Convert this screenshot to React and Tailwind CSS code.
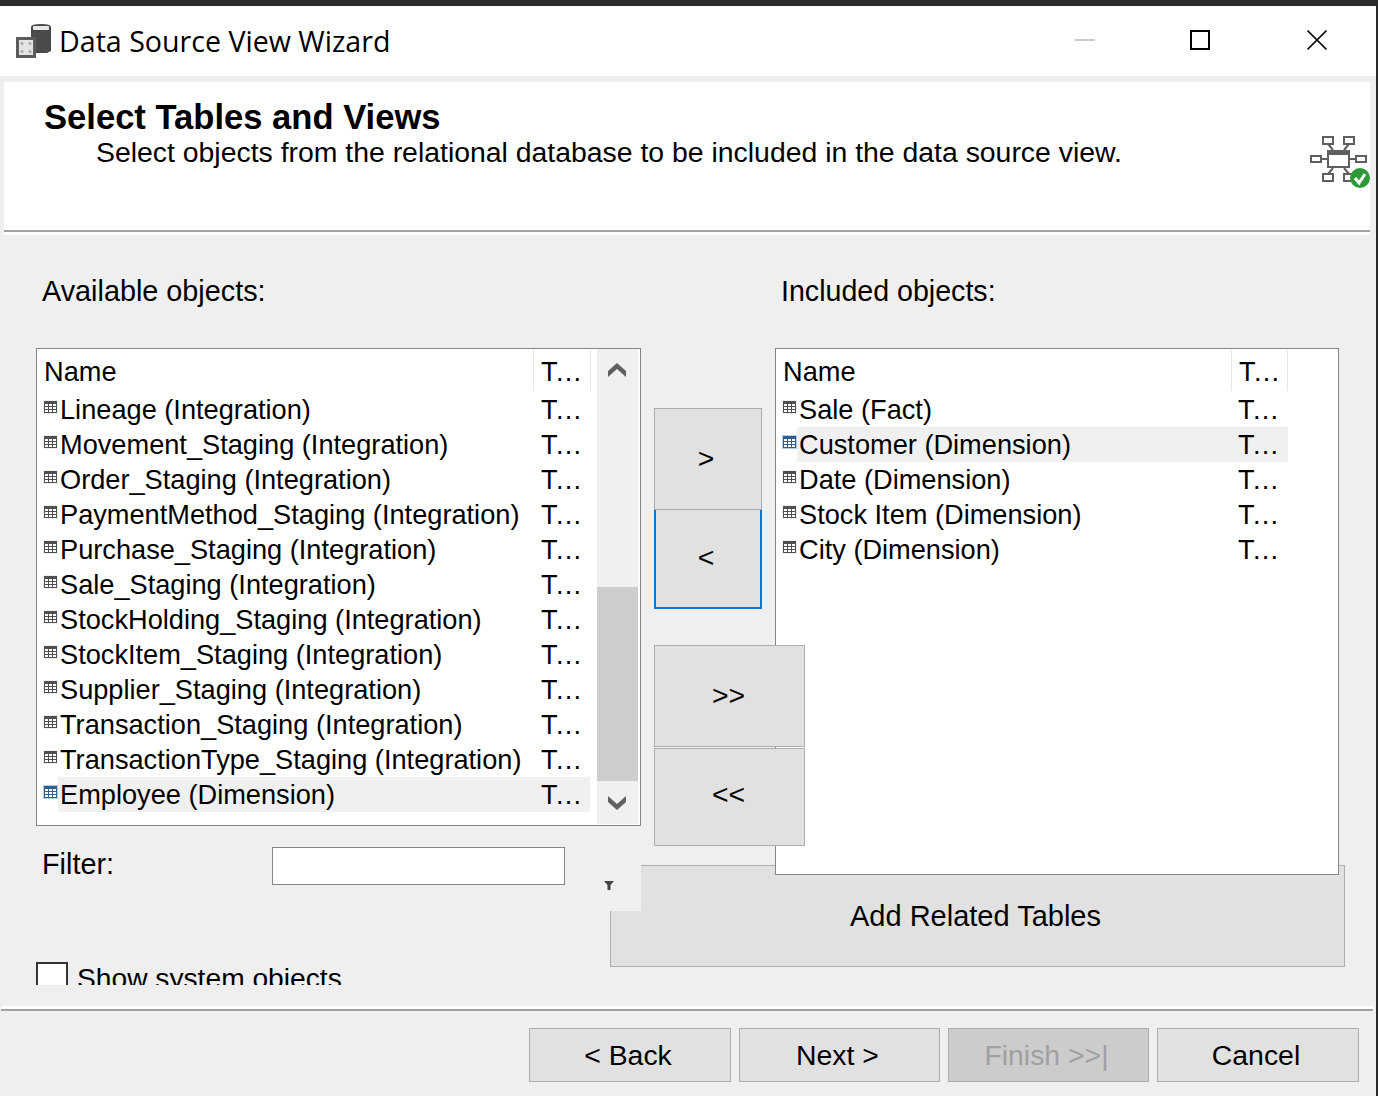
import { twMerge } from "tailwind-merge";

const availableRows = [
  "Lineage (Integration)",
  "Movement_Staging (Integration)",
  "Order_Staging (Integration)",
  "PaymentMethod_Staging (Integration)",
  "Purchase_Staging (Integration)",
  "Sale_Staging (Integration)",
  "StockHolding_Staging (Integration)",
  "StockItem_Staging (Integration)",
  "Supplier_Staging (Integration)",
  "Transaction_Staging (Integration)",
  "TransactionType_Staging (Integration)",
  "Employee (Dimension)",
];

const includedRows = [
  "Sale (Fact)",
  "Customer (Dimension)",
  "Date (Dimension)",
  "Stock Item (Dimension)",
  "City (Dimension)",
];

function TableIcon({ selected }) {
  const dark = selected ? "#2f5f8f" : "#4f4f4f";
  return (
    <svg width="15" height="14" viewBox="0 0 15 14" className="shrink-0">
      <rect width="15" height="14" fill={selected ? "#b5cfe6" : "#f0f0f0"} />
      <rect x="1.5" y="1.5" width="12" height="11" fill="#ffffff" stroke={dark} />
      <rect x="1" y="1" width="13" height="3" fill={dark} />
      <path d="M5.5 4v8M9.5 4v8M2 6.5h11M2 9.5h11" stroke={dark} strokeWidth="1" />
    </svg>
  );
}

function ObjectRow({ name, selected, nameWidth, cellWidth }) {
  return (
    <div className="flex h-[35px] pl-[6px]">
      <div className="w-[15px] shrink-0 pt-[8px]">
        <TableIcon selected={selected} />
      </div>
      <div className={`flex h-[35px] items-center pt-[2px] ${cellWidth} ${selected ? "bg-[#f0f0f0]" : ""}`}>
        <div className={`${nameWidth} shrink-0 pl-[2px] whitespace-nowrap`}>{name}</div>
        <div className="tracking-[1.3px]">T...</div>
      </div>
    </div>
  );
}

function ListHeader({ nameWidth, typeWidth }) {
  return (
    <div className="flex h-[43px] items-center">
      <div className={`${nameWidth} flex h-[41px] shrink-0 items-center border-r border-[#e5e5e5] pl-[7px] pt-[4px]`}>Name</div>
      <div className={`${typeWidth} flex h-[41px] shrink-0 items-center border-r border-[#e5e5e5] pl-[7px] pt-[4px] tracking-[1.3px]`}>T...</div>
    </div>
  );
}

function Chevron({ down }) {
  return (
    <svg width="18" height="16" viewBox="0 0 18 16" className="mr-[1px]">
      <path
        d={down ? "M0 1l9 8 9-8v6l-9 8-9-8z" : "M0 15l9-8 9 8V9L9 1 0 9z"}
        fill="#606060"
      />
    </svg>
  );
}

function NetworkIcon() {
  return (
    <svg width="60" height="53" viewBox="0 0 60 53" className="mt-[53px] shrink-0">
      <g fill="none" stroke="#5f5f5f" strokeWidth="2">
        <path d="M18 9l5 6M39 9l-5 6M18 39l5-6M39 39l-5-6M11 24h6M40 24h6" />
        <rect x="13" y="2" width="10" height="7" fill="#ffffff" />
        <rect x="34" y="2" width="10" height="7" fill="#ffffff" />
        <rect x="1" y="21" width="10" height="6" fill="#ffffff" />
        <rect x="46" y="21" width="10" height="6" fill="#ffffff" />
        <rect x="13" y="39" width="10" height="7" fill="#ffffff" />
        <rect x="34" y="39" width="10" height="7" fill="#ffffff" />
        <rect x="18" y="16" width="21" height="16" fill="#ffffff" />
      </g>
      <rect x="17" y="15" width="23" height="5" fill="#5f5f5f" />
      <circle cx="50" cy="43" r="10" fill="#2d9a3a" />
      <path d="M45 43l4 5 6-9" fill="none" stroke="#ffffff" strokeWidth="3" />
    </svg>
  );
}

function WizardIcon() {
  return (
    <svg width="37" height="36" viewBox="0 0 37 36" className="-ml-[1px] shrink-0">
      <path d="M16 4q0-3 10-3t10 3v24l-4 2H20v-14h-4z" fill="#4a4a4a" />
      <rect x="18" y="3" width="16" height="4" rx="1" fill="#e8e8e8" />
      <rect x="1" y="14" width="20" height="21" fill="#5c5c5c" />
      <rect x="4" y="17" width="14" height="15" fill="#e4e4e4" />
      <circle cx="7" cy="20.5" r="1.5" fill="#a8a8a8" />
      <circle cx="15" cy="20.5" r="1.5" fill="#a8a8a8" />
      <circle cx="7" cy="28.5" r="1.5" fill="#a8a8a8" />
      <circle cx="15" cy="28.5" r="1.5" fill="#a8a8a8" />
    </svg>
  );
}

function WizardButton({ children, className = "" }) {
  return (
    <button
      className={twMerge(
        "flex shrink-0 items-center justify-center border border-[#adadad] bg-[#e1e1e1] pr-[4px] text-[28.4px]",
        className
      )}
    >
      {children}
    </button>
  );
}

export default function App() {
  return (
    <div className="flex h-[1096px] w-[1378px] flex-col overflow-hidden bg-[#2b2b2b] font-['Liberation_Sans',sans-serif] text-[27.2px] text-black">
      <div className="h-[6px] shrink-0" />
      <div className="mr-[2px] flex flex-1 flex-col bg-[#efefef]">
        {/* title bar */}
        <div className="flex h-[70px] shrink-0 items-center bg-white pl-[16px]">
          <WizardIcon />
          <span className="ml-[7px] font-['Open_Sans',sans-serif] text-[28.6px] leading-none">Data Source View Wizard</span>
          <div className="ml-auto flex -translate-y-[1px] items-center">
            <div className="h-[2px] w-[20px] bg-[#cccccc]" />
            <div className="ml-[95px] h-[20px] w-[20px] border-2 border-black" />
            <svg width="20" height="20" viewBox="0 0 20 20" className="ml-[97px] mr-[49px]">
              <path d="M0.5 0.5l19 19M19.5 0.5l-19 19" stroke="#111111" strokeWidth="1.6" />
            </svg>
          </div>
        </div>

        {/* header */}
        <div className="ml-[4px] mt-[6px] h-[153px] w-[1366px] shrink-0 bg-white">
          <div className="flex h-[148px] justify-between">
            <div>
              <h1 className="pl-[40px] pt-[16px] text-[34.6px] font-bold leading-[38px]">Select Tables and Views</h1>
              <p className="pl-[92px] text-[28.4px] leading-[32px]">
                Select objects from the relational database to be included in the data source view.
              </p>
            </div>
            <NetworkIcon />
          </div>
          <div className="h-[2px] bg-[#a0a0a0]" />
        </div>

        {/* body */}
        <div className="relative flex h-[771px] shrink-0">
          <div className="ml-[36px] w-[605px] shrink-0">
            <div className="h-[113px] pl-[6px] pt-[40px] text-[28.8px] leading-[32px]">Available objects:</div>
            <div className="flex h-[478px] border border-[#82878f] bg-white pr-[2px]">
              <div className="w-[560px] shrink-0">
                <ListHeader nameWidth="w-[497px]" typeWidth="w-[57px]" />
                {availableRows.map((name, i) => (
                  <ObjectRow
                    key={name}
                    name={name}
                    selected={i === availableRows.length - 1}
                    nameWidth="w-[483px]"
                    cellWidth="w-[532px]"
                  />
                ))}
              </div>
              <div className="flex h-[475px] w-[41px] flex-col bg-[#f0f0f0]">
                <div className="flex h-[238px] justify-center pt-[13px]">
                  <Chevron />
                </div>
                <div className="h-[194px] bg-[#cdcdcd]" />
                <div className="flex flex-1 justify-center pt-[14px]">
                  <Chevron down />
                </div>
              </div>
            </div>
            <div className="mt-[21px] flex h-[38px] items-center pl-[6px]">
              <span className="w-[230px] shrink-0 pb-[2px] text-[28.8px]">Filter:</span>
              <div className="h-[38px] w-[293px] border border-[#82878f] bg-white" />
            </div>
            <div className="mt-[77px] flex h-[23px] items-start overflow-hidden">
              <div className="h-[32px] w-[32px] shrink-0 border-2 border-[#333333] bg-white" />
              <span className="ml-[9px] whitespace-nowrap text-[28.2px] leading-[32px]">Show system objects</span>
            </div>
          </div>

          <div className="relative z-20 flex w-[134px] shrink-0 flex-col pl-[13px] pt-[173px]">
            <WizardButton className="h-[102px] w-[108px] pb-[2px]">&gt;</WizardButton>
            <WizardButton className="h-[99px] w-[108px] border-2 border-t-0 border-[#0078d7] pb-[2px]">&lt;</WizardButton>
            <WizardButton className="mt-[36px] h-[102px] w-[151px] pb-[2px] pr-[2px]">&gt;&gt;</WizardButton>
            <WizardButton className="mt-[1px] h-[98px] w-[151px] pb-[6px] pr-[2px]">&lt;&lt;</WizardButton>
          </div>

          <div className="relative z-10 w-[564px] shrink-0">
            <div className="h-[113px] pl-[6px] pt-[40px] text-[28.6px] leading-[32px]">Included objects:</div>
            <div className="h-[527px] border border-[#82878f] bg-white">
              <ListHeader nameWidth="w-[456px]" typeWidth="w-[56px]" />
              {includedRows.map((name, i) => (
                <ObjectRow
                  key={name}
                  name={name}
                  selected={i === 1}
                  nameWidth="w-[441px]"
                  cellWidth="w-[491px]"
                />
              ))}
            </div>
          </div>

          {/* these sit under the included list and over each other in the original dialog */}
          <WizardButton className="absolute left-[610px] top-[630px] h-[102px] w-[735px] pt-[2px] text-[29px]">Add Related Tables</WizardButton>
          <div className="absolute left-[590px] top-[630px] z-10 flex h-[46px] w-[51px] justify-center bg-[#f0f0f0] pt-[16px]">
            <svg width="10" height="9" viewBox="0 0 10 9" className="mr-[13px]">
              <path d="M0 0h10L6.5 4v5h-3V4z" fill="#444444" />
            </svg>
          </div>
        </div>

        <div className="ml-[1px] h-[3px] w-[1372px] shrink-0 bg-white" />
        <div className="ml-[1px] h-[2px] w-[1372px] shrink-0 bg-[#a0a0a0]" />

        {/* footer */}
        <div className="flex gap-[8px] pl-[529px] pt-[17px]">
          <WizardButton className="h-[54px] w-[202px]">&lt; Back</WizardButton>
          <WizardButton className="h-[54px] w-[201px]">Next &gt;</WizardButton>
          <WizardButton className="h-[54px] w-[201px] bg-[#cccccc] text-[#a0a0a0]">Finish &gt;&gt;|</WizardButton>
          <WizardButton className="h-[54px] w-[202px]">Cancel</WizardButton>
        </div>
      </div>
    </div>
  );
}
